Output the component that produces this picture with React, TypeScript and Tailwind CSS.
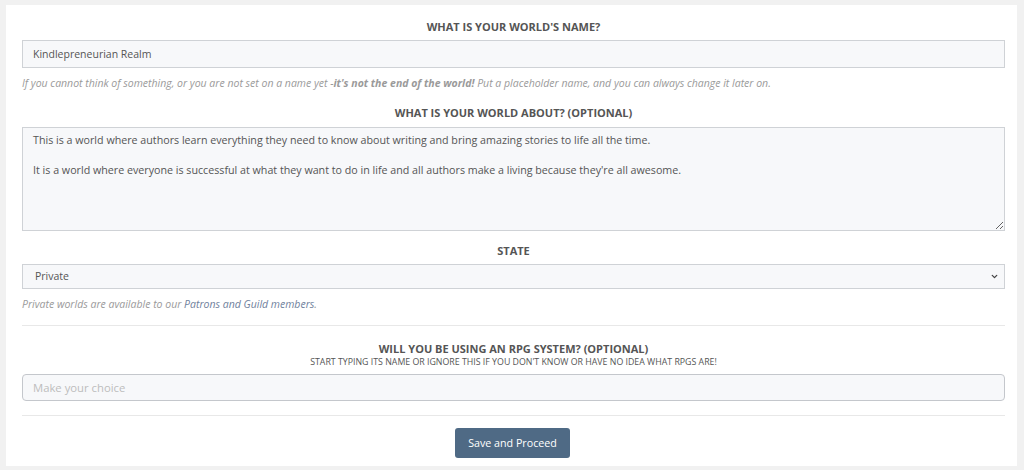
import { ChevronDown } from "lucide-react";

const font = { fontFamily: "'Open Sans', 'Liberation Sans', sans-serif" };

function Title({ children }: { children: React.ReactNode }) {
  return (
    <h3 className="text-center text-[11px] leading-[16px] font-bold uppercase text-[#555]">
      {children}
    </h3>
  );
}

export default function App() {
  return (
    <div className="min-h-[470px] bg-[#f1f1f1] pt-[5px] pb-[3px] pl-[6px] pr-[7px] font-['Open_Sans',sans-serif]">
      <form className="bg-white pt-[14px] pb-[8px] pl-4 pr-[12px]">
        {/* World name */}
        <Title>What is your world's name?</Title>
        <input
          type="text"
          defaultValue="Kindlepreneurian Realm"
          className="mt-[5px] block h-[28px] w-full border border-[#cfd2d6] bg-[#f7f8fa] px-[10px] text-[10.5px] text-[#555] outline-none"
        />
        <p className="mt-[8px] text-[10.5px] leading-[14px] italic text-[#9a9a9a]">
          If you cannot think of something, or you are not set on a name yet -
          <b className="font-bold">it's not the end of the world!</b> Put a placeholder name, and you can always
          change it later on.
        </p>

        {/* About */}
        <div className="mt-[15px]">
          <Title>What is your world about? (Optional)</Title>
        </div>
        <textarea
          defaultValue={
            "This is a world where authors learn everything they need to know about writing and bring amazing stories to life all the time.\n\nIt is a world where everyone is successful at what they want to do in life and all authors make a living because they're all awesome."
          }
          className="mt-[6px] block h-[104px] w-full border border-[#cfd2d6] bg-[#f7f8fa] px-[10px] pt-[5px] text-[10.7px] leading-[15px] text-[#555] outline-none"
        />

        {/* State */}
        <div className="mt-[12px]">
          <Title>State</Title>
        </div>
        <div className="relative mt-[5px]">
          <select
            defaultValue="private"
            className="block h-[25px] w-full appearance-none border border-[#cfd2d6] bg-[#f7f8fa] pl-[12px] text-[10.5px] text-[#555] outline-none"
          >
            <option value="private">Private</option>
            <option value="public">Public</option>
          </select>
          <ChevronDown
            className="pointer-events-none absolute right-[6px] top-[8px] h-[9px] w-[9px] text-[#444]"
            strokeWidth={3.5}
          />
        </div>
        <p className="mt-[8px] text-[10.5px] leading-[14px] italic text-[#9a9a9a]">
          Private worlds are available to our <span className="text-[#6f819c]">Patrons and Guild members</span>.
        </p>

        <hr className="mt-[14px] border-t border-[#e8e8e8]" />

        {/* RPG system */}
        <div className="mt-[15px]">
          <Title>Will you be using an RPG system? (Optional)</Title>
        </div>
        <p className="text-center text-[8.8px] leading-[10px] uppercase text-[#555]">
          Start typing its name or ignore this if you don't know or have no idea what RPGs are!
        </p>
        <input
          type="text"
          placeholder="Make your choice"
          className="mt-[7px] block h-[27px] w-full rounded-[4px] border border-[#c4c7cc] bg-[#f7f8fa] px-[10px] text-[11.3px] text-[#555] outline-none placeholder:text-[#bdbdbd]"
        />

        <hr className="mt-[14px] border-t border-[#e8e8e8]" />

        <div className="mt-[12px] flex justify-center pr-[2px]">
          <button
            type="button"
            style={font}
            className="h-[30px] w-[115px] rounded-[3px] bg-[#4f6a85] text-[10.7px] text-white"
          >
            Save and Proceed
          </button>
        </div>
      </form>
    </div>
  );
}
